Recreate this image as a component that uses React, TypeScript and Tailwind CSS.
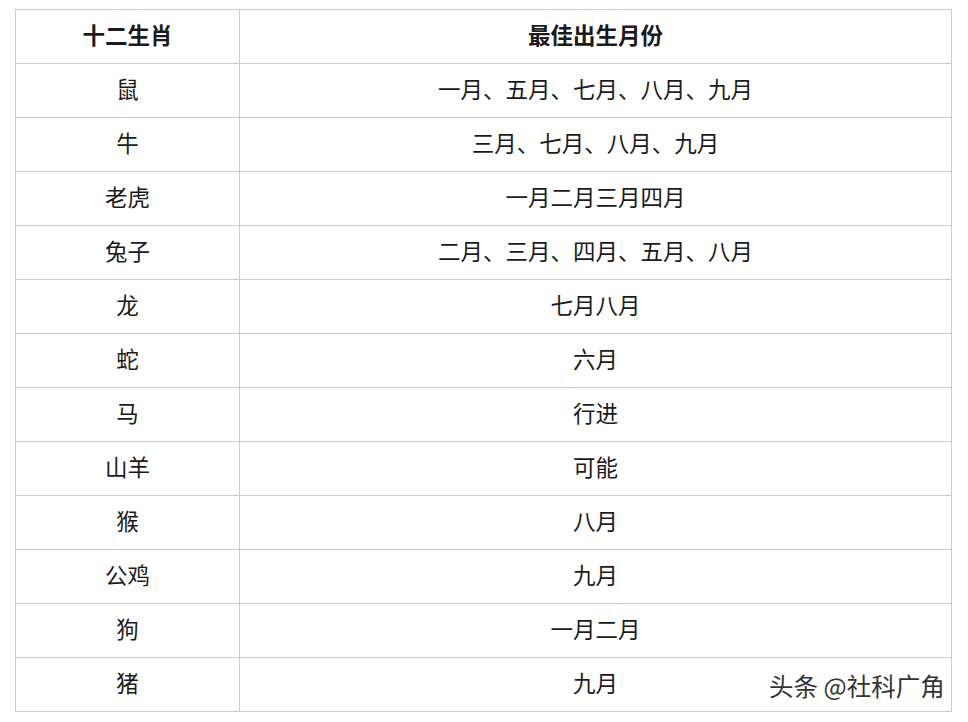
const rows: [string, string][] = [
  ["鼠", "一月、五月、七月、八月、九月"],
  ["牛", "三月、七月、八月、九月"],
  ["老虎", "一月二月三月四月"],
  ["兔子", "二月、三月、四月、五月、八月"],
  ["龙", "七月八月"],
  ["蛇", "六月"],
  ["马", "行进"],
  ["山羊", "可能"],
  ["猴", "八月"],
  ["公鸡", "九月"],
  ["狗", "一月二月"],
  ["猪", "九月"],
];

export default function App() {
  return (
    <div className="relative w-[968px] h-[722px] bg-white pt-[9px] pl-[15px] font-['Microsoft_YaHei','Noto_Sans_CJK_SC',sans-serif] text-[#1a1a1a]">
      <table className="border-collapse table-fixed w-[937px]">
        <colgroup>
          <col className="w-[224px]" />
          <col />
        </colgroup>
        <thead>
          <tr className="h-[54px]">
            <th className="border border-[#cccccc] text-[22.5px] font-bold text-center p-0 pb-[4px]">十二生肖</th>
            <th className="border border-[#cccccc] text-[22.5px] font-bold text-center p-0 pb-[4px]">最佳出生月份</th>
          </tr>
        </thead>
        <tbody>
          {rows.map(([animal, months]) => (
            <tr key={animal} className="h-[54px]">
              <td className="border border-[#cccccc] text-[22.5px] text-center p-0 pb-[4px]">{animal}</td>
              <td className="border border-[#cccccc] text-[22.5px] text-center p-0 pb-[4px]">{months}</td>
            </tr>
          ))}
        </tbody>
      </table>
      <div className="absolute left-[769px] top-[668px] text-[24.5px] leading-[36px] text-[#333333] [text-shadow:0_0_2px_#fff,0_0_2px_#fff]">
        头条 @社科广角
      </div>
    </div>
  );
}
